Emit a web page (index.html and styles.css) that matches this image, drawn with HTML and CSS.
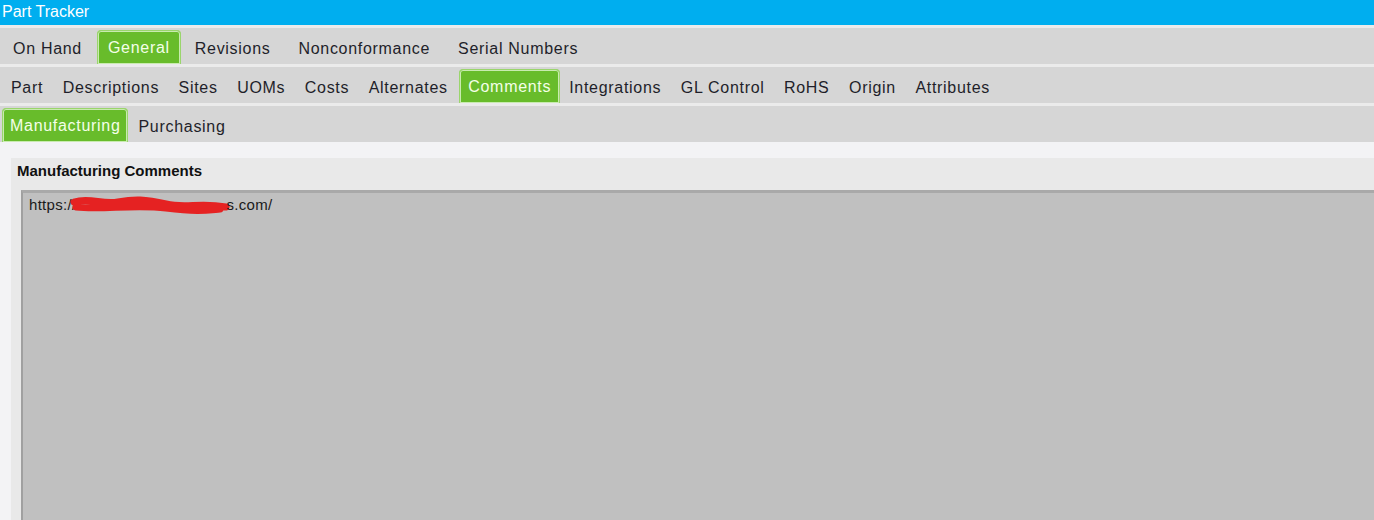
FILE: index.html
```html
<!DOCTYPE html>
<html lang="en">
<head>
    <meta charset="UTF-8">
    <meta name="viewport" content="width=device-width, initial-scale=1.0">
    <title>Part Tracker</title>
    <link rel="stylesheet" href="styles.css">
</head>
<body>

    <div class="titlebar">Part Tracker</div>

    <div class="tabrow row-main">
        <div class="tab">On Hand</div>
        <div class="tab active">General</div>
        <div class="tab">Revisions</div>
        <div class="tab">Nonconformance</div>
        <div class="tab">Serial Numbers</div>
    </div>

    <div class="tabrow row-sub">
        <div class="tab">Part</div>
        <div class="tab">Descriptions</div>
        <div class="tab">Sites</div>
        <div class="tab">UOMs</div>
        <div class="tab">Costs</div>
        <div class="tab">Alternates</div>
        <div class="tab active">Comments</div>
        <div class="tab">Integrations</div>
        <div class="tab">GL Control</div>
        <div class="tab">RoHS</div>
        <div class="tab">Origin</div>
        <div class="tab">Attributes</div>
    </div>

    <div class="tabrow row-comments">
        <div class="tab active">Manufacturing</div>
        <div class="tab">Purchasing</div>
    </div>

    <div class="content">
        <div class="panel">
            <div class="panel-title">Manufacturing Comments</div>
            <div class="comment-box">
                https://<span class="redacted"><svg width="160" height="20" viewBox="0 0 160 20"><path d="M4 7 C20 2 32 10 48 7 S75 4 96 9 S128 7 156 12 M6 12 C32 15 64 9 96 13 S138 15 150 14" stroke="#e52222" stroke-width="7" fill="none" stroke-linecap="round"/></svg></span>s.com/
            </div>
        </div>
    </div>

</body>
</html>
```

FILE: styles.css
```css
body {
    margin: 0;
    font-family: "Liberation Sans", Arial, sans-serif;
    background-color: #f3f3f5;
    overflow: hidden;
}
.titlebar {
    height: 25px;
    line-height: 24px;
    background-color: #00aeef;
    color: white;
    font-size: 16px;
    padding-left: 2px;
}
.tabrow {
    display: flex;
    height: 36px;
    background-color: #d6d6d6;
    border-top: 3px solid #ebebeb;
}
.tab {
    display: flex;
    align-items: center;
    padding-top: 6px;
    box-sizing: border-box;
    height: 100%;
    font-size: 16px;
    letter-spacing: 0.7px;
    color: #1f1f2a;
    white-space: nowrap;
}
.tab.active {
    margin-top: 2px;
    height: 34px;
    padding-top: 0;
    background-color: #68bc2b;
    color: #f4ffe8;
    border: 1px solid #9ad56c;
    border-bottom: none;
    border-radius: 4px 4px 0 0;
    box-shadow: inset 0 0 0 1px #c9ebb0;
}
.row-main {
    padding-left: 13px;
}
.row-main .tab {
    margin-right: 28px;
}
.row-main .tab.active {
    padding: 0 10px;
    margin-left: -13px;
    margin-right: 14px;
}
.row-sub {
    padding-left: 11px;
}
.row-sub .tab {
    margin-right: 19.5px;
}
.row-sub .tab.active {
    padding: 0 8px;
    margin-left: -8px;
    margin-right: 9px;
}
.row-comments {
    padding-left: 2px;
}
.row-comments .tab.active {
    padding: 0 6px 0 7px;
    margin-right: 11px;
}
.content {
    padding: 16px 0 0 11px;
}
.panel {
    background-color: #e9e9e9;
    height: 400px;
}
.panel-title {
    font-size: 15px;
    font-weight: bold;
    color: #111;
    padding: 4px 0 0 6px;
    height: 32px;
    box-sizing: border-box;
}
.comment-box {
    margin-left: 10px;
    background-color: #c0c0c0;
    border-top: 3px solid #a9a9a9;
    border-left: 2px solid #a0a0a0;
    height: 400px;
    padding: 2px 0 0 6px;
    font-size: 15px;
    letter-spacing: 0.3px;
    color: #1a1a1a;
}
.redacted svg {
    vertical-align: -5px;
    margin-left: -6px;
    margin-right: -4px;
}
```
